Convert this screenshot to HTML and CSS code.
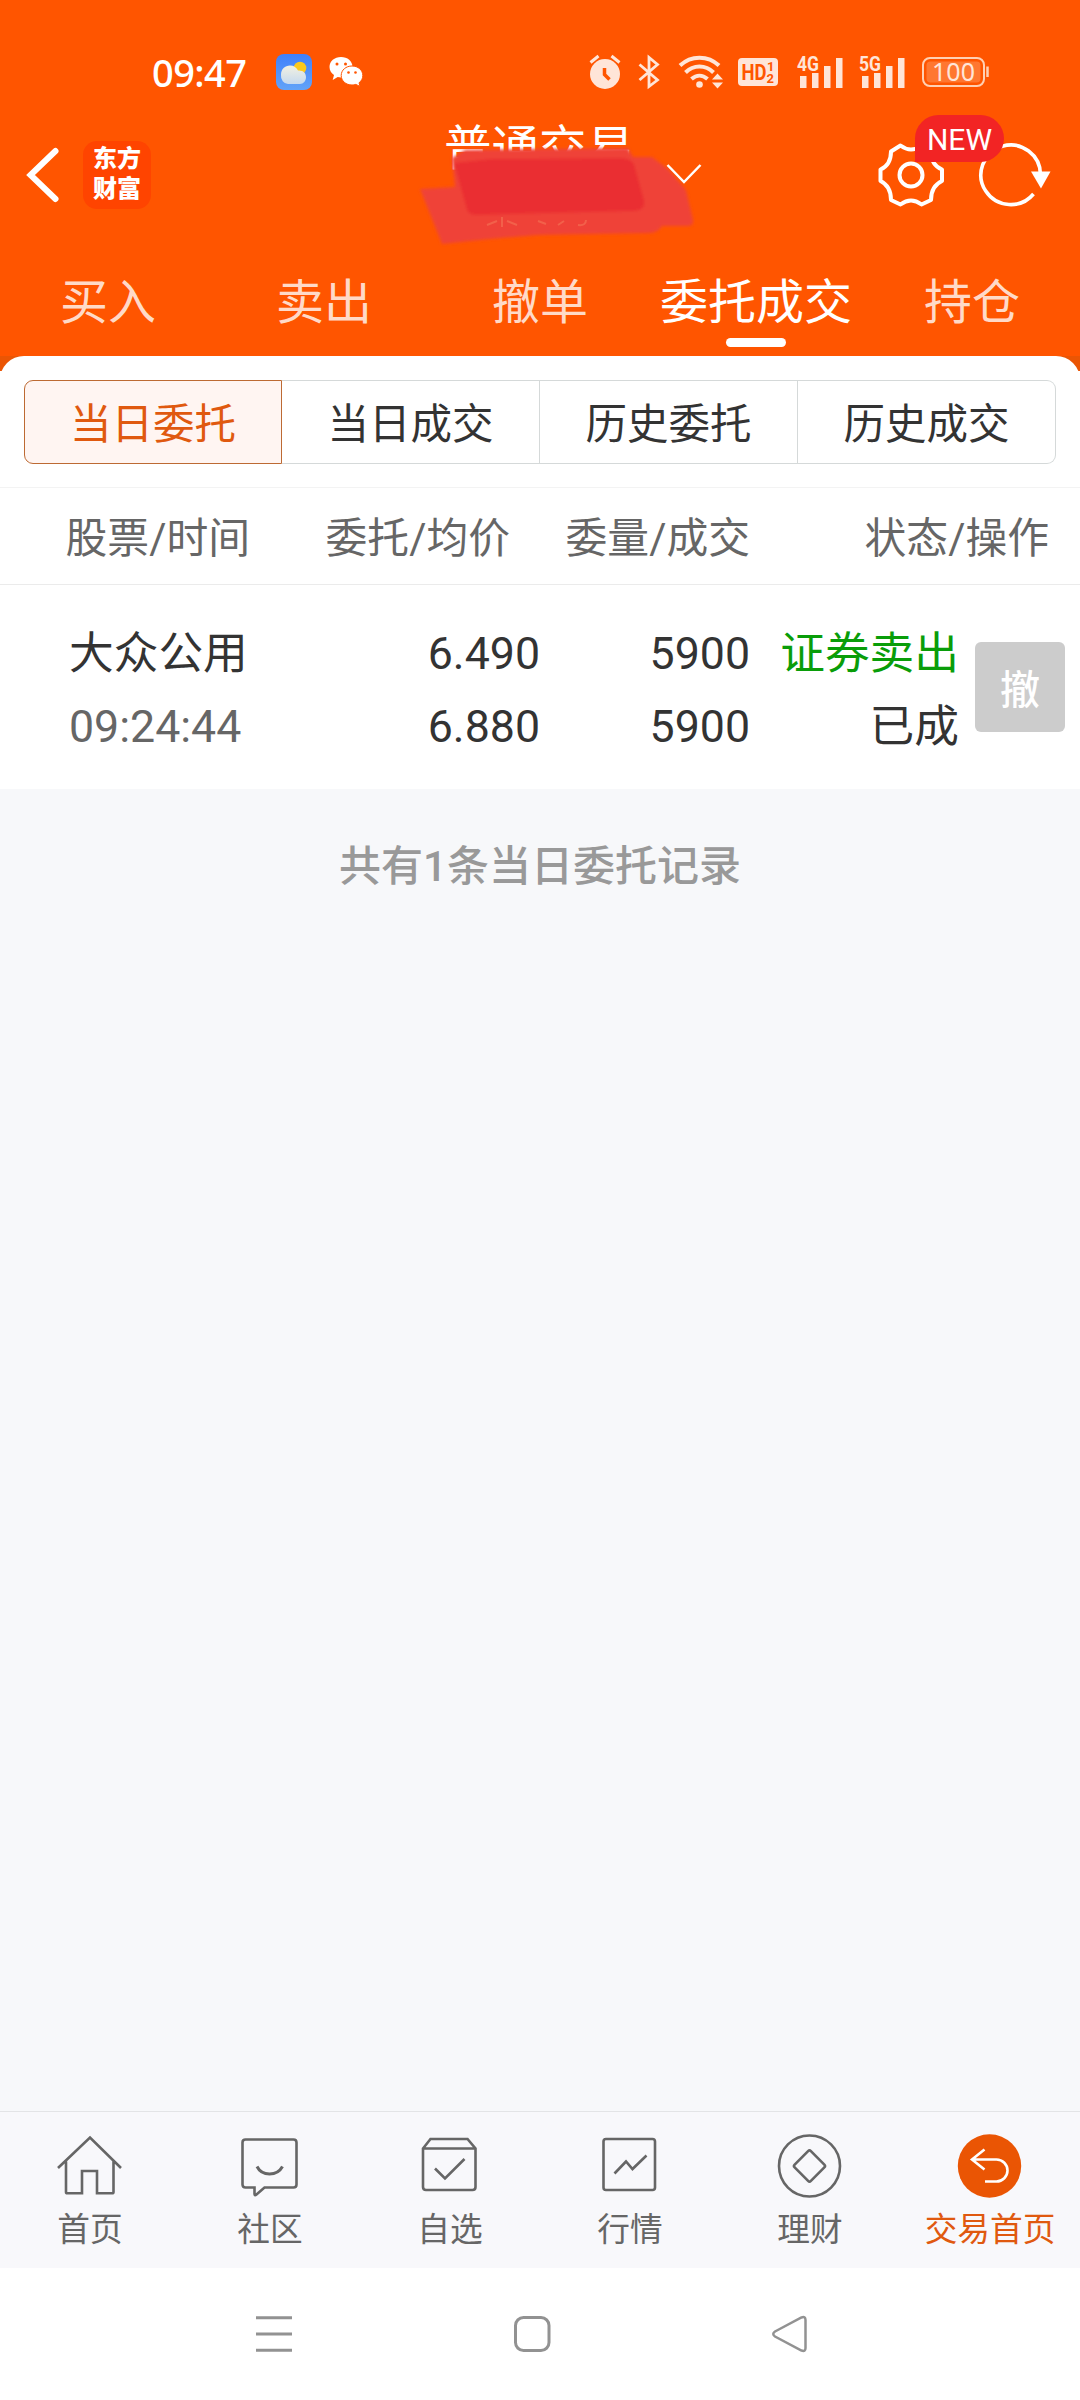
FILE: index.html
```html
<!doctype html>
<html lang="zh-CN">

<head>
    <meta charset="UTF-8">
    <meta name="viewport" content="width=device-width, initial-scale=1.0">
    <title>委托成交</title>
    <link rel="stylesheet" href="styles.css">
</head>

<body>
    <div class="app">
        <header class="top">
            <div class="status">
                <span class="clock">09:47</span>
                <svg class="weather" width="36" height="36" viewBox="0 0 36 36">
                    <defs>
                        <linearGradient id="sky" x1="0" y1="0" x2="0" y2="1">
                            <stop offset="0" stop-color="#3f80fb" />
                            <stop offset="1" stop-color="#62a3f8" />
                        </linearGradient>
                        <linearGradient id="cloud" x1="0" y1="0" x2="0" y2="1">
                            <stop offset="0" stop-color="#f3f1e2" />
                            <stop offset="1" stop-color="#c5d9ee" />
                        </linearGradient>
                    </defs>
                    <rect width="36" height="36" rx="8" fill="url(#sky)" />
                    <circle cx="24" cy="14" r="6.3" fill="#fcc91c" />
                    <path d="M12 30a7 8 0 0 1-7-9c0-6 4-9.500 9-9.500 4 0 6.500 2 8 5 5-.5 8 2.500 8 6.500s-2.500 7-6 7z" fill="url(#cloud)" />
                </svg>
                <svg class="wechat" width="34" height="32" viewBox="0 0 34 32">
                    <path d="M12 1C5.500 1 .5 5.300.5 11c0 3.500 2 6.300 4.500 8l-1.300 5 5-3 3.300.5c6 0 11.500-4.500 11.500-10.500S18.500 1 12 1z" fill="#fff" />
                    <path d="M23 10c-6 0-10.800 4-10.800 9.500S17 29 23 29c1.300 0 2.600-.2 3.800-.6l4.200 2-1-3.600c2.500-1.800 3.800-4.300 3.800-7.300C33.800 14 29 10 23 10z" fill="#fff" stroke="#ff5500" />
                    <g fill="#ff5500">
                        <circle cx="8" cy="8" r="1.500" />
                        <circle cx="16.500" cy="8" r="1.500" />
                        <circle cx="19.500" cy="16.500" r="1.300" />
                        <circle cx="26.500" cy="16.500" r="1.300" />
                    </g>
                </svg>
                <div class="signals">
                    <svg width="32" height="36" viewBox="0 0 32 36">
                        <circle cx="16" cy="20" r="15" fill="#ffe5d8" />
                        <path d="M1.500 8.500l8-6.500M30.500 8.500l-8-6.500" stroke="#ffe5d8" stroke-width="3" />
                        <path d="M15.500 14v6.500l5 5" fill="none" stroke="#ff5500" stroke-width="3.500" />
                    </svg>
                    <svg class="bluetooth" width="22" height="36" viewBox="0 0 22 36">
                        <path d="M1.500 10.500l18 15.500L11 32.500v-29l8.500 7L1.500 26" fill="none" stroke="#ffe5d8" stroke-width="2.800" />
                    </svg>
                    <svg class="wifi" width="45" height="36" viewBox="0 0 45 36">
                        <g fill="none" stroke="#ffe5d8" stroke-width="4">
                            <path d="M1 11.500c11-10.500 28-10.500 39 0" />
                            <path d="M6.500 18.500c8-8 20-8 28 0" />
                            <path d="M12.500 25c5-4.500 11-4.500 16 0" />
                        </g>
                        <circle cx="20.500" cy="30.500" r="3.300" fill="#ffe5d8" />
                        <path d="M33 25.500h11l-5.500-6zM33 28.500h11l-5.500 6z" fill="#ffe5d8" />
                    </svg>
                    <svg class="hd" width="40" height="29" viewBox="0 0 40 29">
                        <rect width="40" height="28" rx="4" fill="#ffe5d8" />
                        <g class="hdText">
                            <text x="3.500" y="22" font-size="22" textLength="25" lengthAdjust="spacingAndGlyphs">HD</text>
                            <text x="29" y="13" font-size="13">1</text>
                            <text x="28.500" y="25" font-size="13">2</text>
                        </g>
                    </svg>
                    <svg class="cell" width="47" height="34" viewBox="0 0 47 34">
                        <text class="cellText" x="0" y="16" textLength="22" lengthAdjust="spacingAndGlyphs">4G</text>
                        <path d="M3 21h6.500v12H3zM15 18h6.500v15H15zM27 11h6.500v22H27zM39 3h6.500v30H39z" fill="#ffe5d8" />
                    </svg>
                    <svg class="cell second" width="47" height="34" viewBox="0 0 47 34">
                        <text class="cellText" x="0" y="16" textLength="22" lengthAdjust="spacingAndGlyphs">5G</text>
                        <path d="M3 21h6.500v12H3zM15 18h6.500v15H15zM27 11h6.500v22H27zM39 3h6.500v30H39z" fill="#ffe5d8" />
                    </svg>
                    <svg class="battery" width="68" height="30" viewBox="0 0 68 30">
                        <rect x="1" y="1" width="61" height="28" rx="7" fill="none" stroke="#ffd0b3" stroke-width="2" />
                        <rect x="4.500" y="4.500" width="54" height="21" rx="4" fill="#ff7730" />
                        <path d="M65.500 9.500v10.500" stroke="#ffd0b3" stroke-width="2.500" />
                        <text x="31.500" y="24" text-anchor="middle">100</text>
                    </svg>
                </div>
            </div>

            <div class="titleBar">
                <svg class="back" width="34" height="56" viewBox="0 0 34 56">
                    <path d="M29.500 4L4.500 28l25 24" fill="none" stroke="#fff" stroke-width="6" stroke-linecap="round" />
                </svg>
                <div class="logo">东方<br>财富</div>
                <div class="account">
                    <span class="accountName">普通交易</span>
                    <svg class="scribble" width="290" height="110" viewBox="0 0 290 110">
                        <defs>
                            <filter id="soft">
                                <feGaussianBlur stdDeviation="1.800" />
                            </filter>
                        </defs>
                        <g filter="url(#soft)">
                            <path d="M10 49L45 47 42 18 55 10 218 8 223 17 242 17 258 29 276 50 283 80Q284 85 279 86L252 86Q248 93 240 93L128 95 80 99 32 104z" fill="#ef4338" />
                            <path d="M44 23L80 19 212 18Q221 19 224 24L234 60Q236 70 224 71L66 75Q59 75 57 70z" fill="#ea2d30" />
                        </g>
                        <path d="M77 85l10-4M92 77v10M97 81l10 4M128 81l8 3M148 85l6-4M168 85q8 1 8-5" fill="none" stroke="#f2604a" stroke-width="2" />
                    </svg>
                    <svg class="down" width="36" height="22" viewBox="0 0 36 22">
                        <path d="M1.500 2L18 19 34.500 2" fill="none" stroke="#fff" stroke-width="2.500" />
                    </svg>
                </div>
                <div class="tools">
                    <svg width="68" height="68" viewBox="0 0 68 68">
                        <path d="M23.500 4.500Q34 12.500 44.500 4.500L54 10.500Q54 24 65 28.500V40Q54 45 54 59L44.500 63.500Q34 55.500 23.500 63.500L14 59Q14 45 3.500 40V28.500Q14 24 14 10.500z" fill="none" stroke="#fff" stroke-width="4" stroke-linejoin="round" />
                        <circle cx="34" cy="34" r="11.500" fill="none" stroke="#fff" stroke-width="4" />
                    </svg>
                    <svg class="refresh" width="74" height="68" viewBox="0 0 74 68">
                        <path d="M55.500 53A29.800 29.800 0 1 1 62.500 34" fill="none" stroke="#fff" stroke-width="3.600" />
                        <path d="M53 30.500h19.500l-9.500 17z" fill="#fff" />
                    </svg>
                    <span class="badge">NEW</span>
                </div>
            </div>

            <nav class="tabs">
                <span class="tab">买入</span>
                <span class="tab">卖出</span>
                <span class="tab">撤单</span>
                <span class="tab active">委托成交</span>
                <span class="tab">持仓</span>
            </nav>
        </header>

        <div class="panelBack">
            <div class="panel">
                <div class="segments">
                    <span class="segment selected">当日委托</span>
                    <span class="segment">当日成交</span>
                    <span class="segment">历史委托</span>
                    <span class="segment">历史成交</span>
                </div>
                <div class="head row">
                    <span>股票/时间</span>
                    <span>委托/均价</span>
                    <span>委量/成交</span>
                    <span>状态/操作</span>
                </div>
                <div class="order row">
                    <div class="cellBox stock">大众公用<br><span class="time">09:24:44</span></div>
                    <div class="cellBox">6.490<br>6.880</div>
                    <div class="cellBox">5900<br>5900</div>
                    <div class="cellBox"><span class="sell">证券卖出</span><br>已成</div>
                    <button class="cancel">撤</button>
                </div>
            </div>
        </div>

        <main class="rest">共有1条当日委托记录</main>

        <nav class="bottomNav">
            <div class="navItem">
                <svg width="72" height="72" viewBox="0 0 72 72">
                    <path d="M4 38l32-30.500L67 38M12 31.500V62q0 1.300 1.300 1.300H28V41h15v22.300h15q1.500 0 1.500-1.300V31.500" />
                </svg>
                首页
            </div>
            <div class="navItem">
                <svg width="72" height="72" viewBox="0 0 72 72">
                    <path d="M11.500 9.500h48q3 0 3 3v42q0 3-3 3H30.500l-8 7q-2 1.500-2-.5v-6.500h-9q-3 0-3-3v-42q0-3 3-3z" />
                    <path d="M23 36.500c5 10 20 10 25.500 0" stroke-width="3" />
                </svg>
                社区
            </div>
            <div class="navItem">
                <svg width="72" height="72" viewBox="0 0 72 72">
                    <path d="M9 18.500L16.500 9h37l8 9.500v38.500q0 3-3 3H12q-3 0-3-3zM9 18.500h52.500M21 38.500l10 10L50.500 29" />
                </svg>
                自选
            </div>
            <div class="navItem">
                <svg width="72" height="72" viewBox="0 0 72 72">
                    <rect x="9.500" y="9" width="51.500" height="51" rx="2.500" />
                    <path d="M20.500 43.500L32 31.500l6.500 7.500 14-13.500" />
                </svg>
                行情
            </div>
            <div class="navItem">
                <svg width="72" height="72" viewBox="0 0 72 72">
                    <circle cx="35.500" cy="36" r="30.500" />
                    <rect x="24" y="24.500" width="23" height="23" rx="2" transform="rotate(45 35.500 36)" />
                </svg>
                理财
            </div>
            <div class="navItem current">
                <svg width="72" height="72" viewBox="0 0 72 72">
                    <circle cx="35.500" cy="36" r="31.700" fill="#ea5504" stroke="none" />
                    <path d="M30.500 19.500L18 29.500l12.500 10M18 29.500h24.500a11 11 0 0 1 0 22H31" stroke="#fff" />
                </svg>
                交易首页
            </div>
        </nav>

        <div class="systemBar">
            <svg width="40" height="40" viewBox="0 0 40 40">
                <path d="M2 3.700h36M2 20h36M2 36.300h36" />
            </svg>
            <svg width="40" height="40" viewBox="0 0 40 40">
                <rect x="3.500" y="3.500" width="33.500" height="33" rx="8" />
            </svg>
            <svg width="40" height="40" viewBox="0 0 40 40">
                <path d="M5 17.500L31.500 3.500q4-1.500 4 2.500v28q0 4-4 2.500L5 22.500q-3.500-2.500 0-5z" stroke-width="2.500" />
            </svg>
        </div>
    </div>
</body>

</html>
```
FILE: styles.css
```css
* {
    margin: 0;
    padding: 0;
    box-sizing: border-box;
}

body {
    background-color: #fff;
    color: #333;
    font-family: Roboto, 'Noto Sans CJK SC', sans-serif;
}

svg {
    display: block;
    flex: none;
    overflow: visible;
}

.app {
    width: 1080px;
    height: 2400px;
    display: flex;
    flex-direction: column;
}

.top {
    height: 356px;
    background-color: #ff5500;
    color: #fff;
}

/* status bar */
.status {
    height: 114px;
    padding: 30px 90px 0 152px;
    display: flex;
    align-items: center;
}

.clock {
    width: 124px;
    font: 500 38px 'Noto Sans', sans-serif;
    letter-spacing: -0.6px;
}

.wechat {
    margin-left: 17px;
}

.signals {
    display: flex;
    align-items: center;
    margin-left: auto;
}

.bluetooth {
    margin-left: 17px;
}

.wifi {
    margin-left: 19px;
}

.hd {
    margin-left: 14px;
}

.cell {
    margin-left: 19px;
    margin-top: -1px;
}

.second {
    margin-left: 15px;
}

.battery {
    margin-left: 16px;
}

.hdText {
    font-family: 'Roboto', sans-serif;
    font-weight: 700;
    fill: #ff5500;
}

.cellText {
    font: 700 21px Roboto, sans-serif;
    fill: #ffe5d8;
}

.battery text {
    font: 25px 'Noto Sans', sans-serif;
    fill: #ffe5d8;
}

/* title */
.titleBar {
    height: 121px;
    padding: 0 28px 0 26px;
    display: flex;
    align-items: center;
}

.logo {
    width: 68px;
    height: 68px;
    margin-left: 23px;
    padding-top: 3px;
    border-radius: 14px;
    background-color: #ff4400;
    font: 900 24px/30px 'Liberation Sans', 'Noto Sans CJK SC', sans-serif;
    text-align: center;
}

.account {
    position: relative;
    width: 256px;
    height: 121px;
    margin-left: 293px;
}

.accountName {
    font-size: 47.500px;
    line-height: 71px;
}

.scribble {
    position: absolute;
    left: -34px;
    top: 26px;
}

.down {
    position: absolute;
    right: -2px;
    top: 49px;
}

.tools {
    position: relative;
    display: flex;
    margin-left: auto;
}

.refresh {
    margin-left: 33px;
}

.badge {
    position: absolute;
    left: 38px;
    top: -26px;
    width: 89px;
    height: 47px;
    border-radius: 24px 24px 24px 0;
    background-color: #f22424;
    font-size: 30px;
    line-height: 49px;
    text-align: center;
}

.tabs {
    height: 121px;
    display: flex;
}

.tab {
    width: 216px;
    color: #ffdac8;
    font-size: 48px;
    line-height: 135px;
    text-align: center;
}

.active {
    color: #fff;
    display: flex;
    flex-direction: column;
    align-items: center;
}

.active::after {
    content: "";
    width: 60px;
    height: 9px;
    margin-top: -32px;
    border-radius: 5px;
    background-color: #fff;
    flex: none;
}

/* orders */
.panelBack {
    background: linear-gradient(#ea5504 15px, #fff 15px);
}

.panel {
    background-color: #fff;
    border-radius: 24px 24px 0 0;
}

.segments {
    height: 132px;
    padding: 24px 24px 23px;
    display: flex;
    border-bottom: 1px solid #f3f3f3;
}

.segment {
    width: 258px;
    border: 1px solid #d5d9d9;
    border-left: none;
    font-size: 41.500px;
    line-height: 87px;
    text-align: center;
}

.segment:last-child {
    border-radius: 0 9px 9px 0;
}

.selected {
    border: 1px solid #bd6a33;
    border-radius: 9px 0 0 9px;
    background-color: #fff5f2;
    color: #e0590f;
}

.row {
    display: grid;
    text-align: right;
}

.head {
    height: 97px;
    grid-template-columns: 250px 260px 240px 299px;
    border-bottom: 1px solid #ebebeb;
    color: #666;
    font-size: 41.800px;
    line-height: 101px;
}

.order {
    height: 204px;
    grid-template-columns: 330px 210px 210px 209px 106px;
    align-items: center;
}

.cellBox {
    height: 150px;
    margin-top: 11px;
    font-size: 44.700px;
    line-height: 73px;
}

.stock {
    padding-left: 69px;
    text-align: left;
}

.time {
    color: #666;
}

.sell {
    color: #099d09;
}

.cancel {
    width: 90px;
    height: 90px;
    margin-left: 16px;
    border: none;
    border-radius: 6px;
    background-color: #ccc;
    color: #fff;
    font: 500 40px 'Noto Sans CJK SC', sans-serif;
}

.rest {
    flex: 1;
    padding-top: 47px;
    background-color: #f7f8fa;
    color: #999;
    font-size: 42px;
    font-weight: 500;
    line-height: 62px;
    text-align: center;
}

/* bottom menu */
.bottomNav {
    height: 157px;
    padding-top: 18px;
    display: flex;
    border-top: 1px solid #e3e4e6;
    background-color: #f8f8fb;
}

.navItem {
    width: 180px;
    display: flex;
    flex-direction: column;
    align-items: center;
    color: #666;
    font-size: 32.700px;
    line-height: 56px;
}

.navItem svg {
    fill: none;
    stroke: #666;
    stroke-width: 2.600;
}

.current {
    color: #e0590f;
}

.systemBar {
    height: 132px;
    padding: 46px 270px 0 254px;
    display: flex;
    justify-content: space-between;
    background-color: #fff;
}

.systemBar svg {
    fill: none;
    stroke: #929292;
    stroke-width: 3;
}
```
